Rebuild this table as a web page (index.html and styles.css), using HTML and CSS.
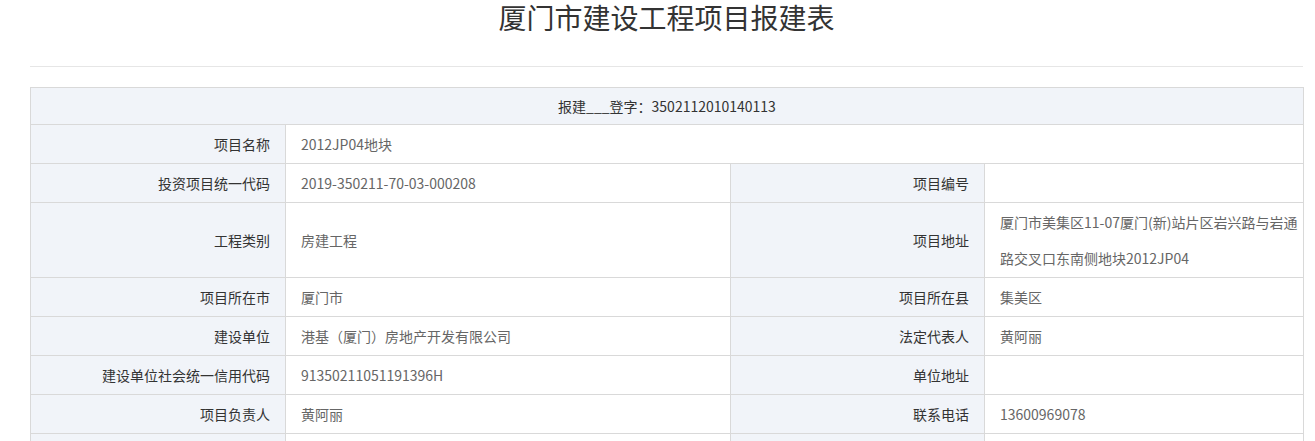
FILE: index.html
```html
<!DOCTYPE html>
<html lang="zh-CN">
<head>
<meta charset="utf-8">
<title>厦门市建设工程项目报建表</title>
<link rel="stylesheet" href="styles.css">
</head>
<body>
<div class="page">
  <h1 class="title">厦门市建设工程项目报建表</h1>
  <table class="form">
    <colgroup>
      <col class="c-label1">
      <col class="c-value1">
      <col class="c-label2">
      <col class="c-value2">
    </colgroup>
    <tr class="head-row">
      <td colspan="4">报建___登字：3502112010140113</td>
    </tr>
    <tr>
      <td class="lbl">项目名称</td>
      <td class="val" colspan="3">2012JP04地块</td>
    </tr>
    <tr>
      <td class="lbl">投资项目统一代码</td>
      <td class="val">2019-350211-70-03-000208</td>
      <td class="lbl">项目编号</td>
      <td class="val"></td>
    </tr>
    <tr>
      <td class="lbl">工程类别</td>
      <td class="val">房建工程</td>
      <td class="lbl">项目地址</td>
      <td class="val addr">厦门市美集区11-07厦门(新)站片区岩兴路与岩通路交叉口东南侧地块2012JP04</td>
    </tr>
    <tr>
      <td class="lbl">项目所在市</td>
      <td class="val">厦门市</td>
      <td class="lbl">项目所在县</td>
      <td class="val">集美区</td>
    </tr>
    <tr>
      <td class="lbl">建设单位</td>
      <td class="val">港基（厦门）房地产开发有限公司</td>
      <td class="lbl">法定代表人</td>
      <td class="val">黄阿丽</td>
    </tr>
    <tr>
      <td class="lbl">建设单位社会统一信用代码</td>
      <td class="val">91350211051191396H</td>
      <td class="lbl">单位地址</td>
      <td class="val"></td>
    </tr>
    <tr>
      <td class="lbl">项目负责人</td>
      <td class="val">黄阿丽</td>
      <td class="lbl">联系电话</td>
      <td class="val">13600969078</td>
    </tr>
    <tr>
      <td class="lbl"></td>
      <td class="val"></td>
      <td class="lbl"></td>
      <td class="val"></td>
    </tr>
  </table>
</div>
</body>
</html>
```

FILE: styles.css
```css
html, body {
  margin: 0;
  padding: 0;
  background: #ffffff;
}

body {
  font-family: "Microsoft YaHei", "Noto Sans CJK SC", "Noto Sans", sans-serif;
  font-size: 14px;
  color: #333333;
}

.page {
  margin-left: 30px;
  width: 1273px;
}

.title {
  margin: 0;
  padding: 0;
  font-size: 28px;
  font-weight: normal;
  line-height: 34px;
  text-align: center;
  color: #333333;
  border-bottom: 1px solid #e6e6e6;
  height: 67px;
  box-sizing: border-box;
}

.form {
  margin-top: 20px;
  width: 1273px;
  table-layout: fixed;
  border-collapse: collapse;
  border: 1px solid #d2d2d2;
}

.c-label1 { width: 255px; }
.c-value1 { width: 445px; }
.c-label2 { width: 254px; }
.c-value2 { width: 319px; }

.form td {
  border: 1px solid #d9d9d9;
  line-height: 36px;
  height: 36px;
  padding: 1px 15px;
  vertical-align: middle;
}

.head-row td {
  background: #f1f4f9;
  text-align: center;
  padding: 0;
  color: #333333;
}

.form td.lbl {
  background: #f1f4f9;
  text-align: right;
  color: #333333;
}

.form td.val {
  background: #ffffff;
  text-align: left;
  color: #666666;
}

.form td.addr {
  padding-right: 2px;
}
```
